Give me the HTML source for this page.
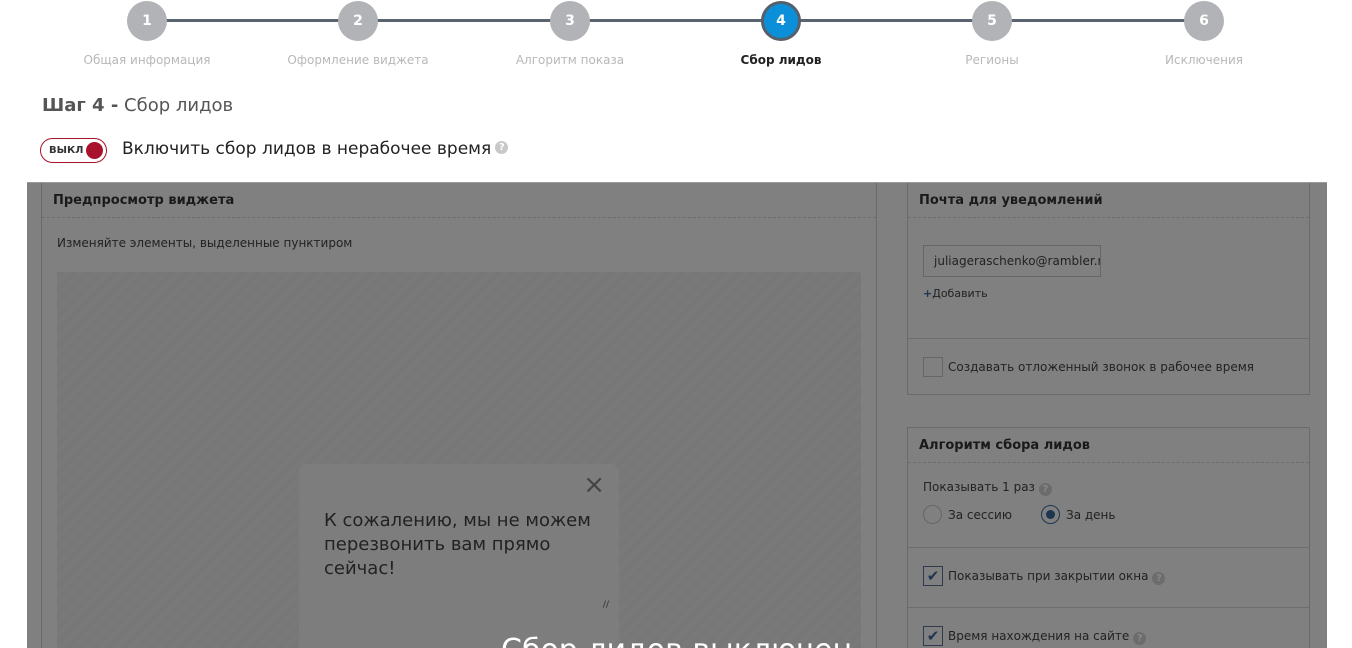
<!DOCTYPE html>
<html><head><meta charset="utf-8"><style>
*{box-sizing:border-box;margin:0;padding:0}
html,body{width:1352px;height:648px;overflow:hidden}
body{background:#fff;font-family:"DejaVu Sans","Liberation Sans",sans-serif;position:relative;color:#333}
.abs{position:absolute}
.line{position:absolute;top:19px;left:147px;width:1057px;height:3px;background:#5a6470}
.c{position:absolute;top:1px;width:40px;height:40px;border-radius:50%;background:#b1b3b7;color:#fff;font-weight:bold;font-size:14px;text-align:center;line-height:40px}
.c.a{background:#0a8fd8;border:3px solid #55606c;line-height:34px}
.lb{position:absolute;top:53px;width:220px;margin-left:-110px;text-align:center;font-size:12px;color:#b8b8b8}
.ov{position:absolute;left:27px;top:182px;width:1300px;height:466px;background:#808080;border-top:1px solid #9a9a9a;overflow:hidden}
.pn{position:absolute;border:1px solid #6a6a6a;background:#808080}
.hd{height:35px;border-bottom:1px dashed #6d6d6d;font-weight:bold;font-size:13px;color:#1a1a1a;padding:10px 0 0 11px}
.t{font-size:12px;color:#222;position:absolute;white-space:nowrap}
.cb{position:absolute;width:20px;height:20px;border:1px solid #2d3b4c}
.q{display:inline-block;width:13px;height:13px;border-radius:50%;background:#6c6c6c;color:#888;font-size:10px;font-weight:bold;text-align:center;line-height:13px;vertical-align:-1px;margin-left:4px}
</style></head><body>
<div class="line"></div>
<div class="c" style="left:127px">1</div>
<div class="c" style="left:338px">2</div>
<div class="c" style="left:550px">3</div>
<div class="c a" style="left:761px">4</div>
<div class="c" style="left:972px">5</div>
<div class="c" style="left:1184px">6</div>
<div class="lb" style="left:147px">Общая информация</div>
<div class="lb" style="left:358px">Оформление виджета</div>
<div class="lb" style="left:570px">Алгоритм показа</div>
<div class="lb" style="left:781px;color:#222;font-weight:bold">Сбор лидов</div>
<div class="lb" style="left:992px">Регионы</div>
<div class="lb" style="left:1204px">Исключения</div>
<div class="abs" style="left:42px;top:95px;font-size:18px;color:#555"><b>Шаг 4 -</b> Сбор лидов</div>
<div class="abs" style="left:40px;top:138px;width:67px;height:25px;border:1px solid #a8122a;border-radius:13px;font-size:10px;font-weight:bold;color:#333;padding:6px 0 0 8px">ВЫКЛ<span style="position:absolute;right:3px;top:3px;width:17px;height:17px;border-radius:50%;background:#a8122a"></span></div>
<div class="abs" style="left:122px;top:139px;font-size:17px;color:#222;white-space:nowrap">Включить сбор лидов в нерабочее время<span class="q" style="background:#c8c8c8;color:#fff;vertical-align:4px">?</span></div>
<div class="ov">
 <div class="pn" style="left:14px;top:-1px;width:836px;height:470px">
  <div class="hd">Предпросмотр виджета</div>
  <div class="t" style="left:15px;top:53px">Изменяйте элементы, выделенные пунктиром</div>
  <div class="abs" style="left:15px;top:89px;width:804px;height:380px;background:repeating-linear-gradient(135deg,#777 0 5px,#797979 5px 10px)"></div>
  <div class="abs" style="left:257px;top:281px;width:320px;height:200px;background:#7d7d7d;border-radius:8px">
   <div class="abs" style="right:14px;top:6px;font-size:26px;color:#444">×</div>
   <div class="abs" style="left:25px;top:45px;font-size:18px;line-height:24px;color:#222;width:285px">К сожалению, мы не можем перезвонить вам прямо сейчас!</div>
   <div class="abs" style="right:10px;top:136px;font-size:9px;color:#333">//</div>
  </div>
  <div class="abs" style="left:459px;top:450px;font-size:30px;color:#fff;white-space:nowrap">Сбор лидов выключен</div>
 </div>
 <div class="pn" style="left:880px;top:-1px;width:403px;height:213px">
  <div class="hd">Почта для уведомлений</div>
  <div class="abs" style="left:15px;top:62px;width:178px;height:32px;border:1px solid #666;font-size:12px;color:#222;padding:8px 0 0 10px;overflow:hidden;white-space:nowrap">juliageraschenko@rambler.ru</div>
  <div class="t" style="left:15px;top:104px;font-size:11px"><b style="color:#1e3550">+</b>Добавить</div>
  <div class="abs" style="left:0;top:155px;width:401px;border-top:1px solid #6d6d6d"></div>
  <div class="cb" style="left:15px;top:174px;border-color:#666"></div>
  <div class="t" style="left:40px;top:177px">Создавать отложенный звонок в рабочее время</div>
 </div>
 <div class="pn" style="left:880px;top:244px;width:403px;height:230px">
  <div class="hd">Алгоритм сбора лидов</div>
  <div class="t" style="left:15px;top:52px">Показывать 1 раз<span class="q">?</span></div>
  <div class="abs" style="left:15px;top:77px;width:19px;height:19px;border-radius:50%;border:1px solid #666"></div>
  <div class="t" style="left:40px;top:80px">За сессию</div>
  <div class="abs" style="left:133px;top:77px;width:19px;height:19px;border-radius:50%;border:1px solid #1e3550"><span style="position:absolute;left:4px;top:4px;width:9px;height:9px;border-radius:50%;background:#1e3550"></span></div>
  <div class="t" style="left:158px;top:80px">За день</div>
  <div class="abs" style="left:0;top:119px;width:401px;border-top:1px solid #6d6d6d"></div>
  <div class="cb" style="left:15px;top:138px;color:#1e3550;font-size:15px;line-height:18px;text-align:center">✔</div>
  <div class="t" style="left:40px;top:141px">Показывать при закрытии окна<span class="q">?</span></div>
  <div class="abs" style="left:0;top:179px;width:401px;border-top:1px solid #6d6d6d"></div>
  <div class="cb" style="left:15px;top:198px;color:#1e3550;font-size:15px;line-height:18px;text-align:center">✔</div>
  <div class="t" style="left:40px;top:201px">Время нахождения на сайте<span class="q">?</span></div>
 </div>
</div>
</body></html>
